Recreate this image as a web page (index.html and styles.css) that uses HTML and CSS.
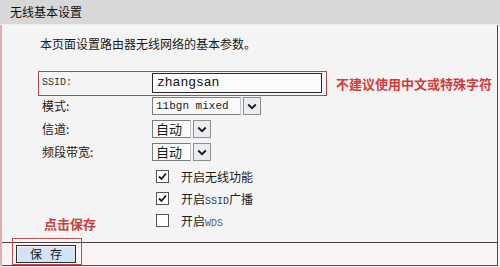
FILE: index.html
```html
<!DOCTYPE html>
<html lang="zh">
<head>
<meta charset="utf-8">
<title>无线基本设置</title>
<link rel="stylesheet" href="styles.css">
</head>
<body>
<div class="hdr">无线基本设置</div>
<div class="panel">
  <div class="main">
    <p class="intro">本页面设置路由器无线网络的基本参数。</p>
    <div class="ssid-line">
      <div class="ssid-box">
        <span class="lbl mono-s">SSID:</span>
        <span class="input">zhangsan</span>
      </div>
      <span class="warn">不建议使用中文或特殊字符</span>
    </div>
    <div class="row r1">
      <span class="lbl">模式:</span>
      <span class="select">
        <span class="val wide mono-m">11bgn mixed</span>
        <span class="arrow"><svg width="10" height="7" viewBox="0 0 10 7"><path d="M1.2 1.5 L5 5.2 L8.8 1.5" fill="none" stroke="#1a1a1a" stroke-width="1.8"/></svg></span>
      </span>
    </div>
    <div class="row">
      <span class="lbl">信道:</span>
      <span class="select">
        <span class="val narrow">自动</span>
        <span class="arrow"><svg width="10" height="7" viewBox="0 0 10 7"><path d="M1.2 1.5 L5 5.2 L8.8 1.5" fill="none" stroke="#1a1a1a" stroke-width="1.8"/></svg></span>
      </span>
    </div>
    <div class="row">
      <span class="lbl">频段带宽:</span>
      <span class="select">
        <span class="val narrow">自动</span>
        <span class="arrow"><svg width="10" height="7" viewBox="0 0 10 7"><path d="M1.2 1.5 L5 5.2 L8.8 1.5" fill="none" stroke="#1a1a1a" stroke-width="1.8"/></svg></span>
      </span>
    </div>
    <div class="checks">
      <div class="chk"><span class="box"><svg width="11" height="11" viewBox="0 0 11 11"><path d="M2 5.5 L4.5 8 L9 2.5" fill="none" stroke="#1a1a1a" stroke-width="1.8"/></svg></span><span>开启无线功能</span></div>
      <div class="chk"><span class="box"><svg width="11" height="11" viewBox="0 0 11 11"><path d="M2 5.5 L4.5 8 L9 2.5" fill="none" stroke="#1a1a1a" stroke-width="1.8"/></svg></span><span>开启<span class="mono-s">SSID</span>广播</span></div>
      <div class="chk"><span class="box"></span><span>开启<span class="mono-s light">WDS</span></span></div>
    </div>
    <span class="note">点击保存</span>
  </div>
  <div class="foot">
    <span class="btn-wrap"><span class="btn"><span>保</span><span>存</span></span></span>
  </div>
</div>
</body>
</html>
```

FILE: styles.css
```css
* { box-sizing: border-box; }
html, body { margin: 0; padding: 0; }
body {
  width: 500px;
  height: 267px;
  overflow: hidden;
  background: #f8f2f3;
  font-family: "Noto Sans CJK SC", "Noto Sans", sans-serif;
  font-size: 12px;
  color: #1a1a1a;
}
.hdr {
  height: 25px;
  line-height: 24px;
  background: #d8d8d8;
  border-bottom: 1px solid #ededed;
  padding-left: 10px;
  color: #111;
}
.panel {
  width: 498px;
  border-left: 2px solid #dfb0b0;
  border-right: 1px solid #5a4848;
}
.main {
  position: relative;
  background: #f4f4f4;
  padding: 11px 0 11px 36px;
  border-bottom: 1px solid #4d3f3f;
}
.intro {
  margin: 0;
  padding-left: 2px;
  line-height: 16px;
}
.ssid-line {
  margin-top: 19px;
  display: flex;
  align-items: center;
}
.ssid-box {
  display: flex;
  align-items: center;
  width: 289px;
  height: 25px;
  border: 1px solid #b04a4a;
  padding: 1px 4px 2px 3px;
}
.lbl {
  width: 110px;
  flex: none;
  line-height: 16px;
}
.mono-s {
  font-family: "Liberation Mono", "DejaVu Sans Mono", monospace;
  font-size: 10px;
  color: #333;
}
.mono-m {
  font-family: "Liberation Mono", "DejaVu Sans Mono", monospace;
  font-size: 11px;
}
.light { color: #5c6070; }
.input {
  width: 170px;
  height: 20px;
  border: 1px solid #2a2a2a;
  background: #fbfbfb;
  padding-left: 4px;
  font-family: "Liberation Mono", "DejaVu Sans Mono", monospace;
  font-size: 13px;
  line-height: 18px;
  color: #111;
}
.warn {
  margin-left: 9px;
  color: #d43a3a;
  font-weight: bold;
  font-size: 13px;
}
.row {
  display: flex;
  align-items: center;
  height: 18px;
  margin-top: 5px;
  padding-left: 4px;
}
.row.r1 { margin-top: 1px; }
.select {
  display: flex;
  gap: 2px;
  height: 18px;
}
.val {
  height: 18px;
  border: 1px solid #7c7c7c;
  border-right-color: #c8c8c8;
  background: #fafafa;
  padding-left: 3px;
  line-height: 16px;
}
.val.wide { width: 89px; }
.val.narrow { width: 39px; font-size: 13px; }
.arrow {
  width: 18px;
  height: 18px;
  border: 1px solid #8e8e8e;
  background: #e9ecf1;
  display: flex;
  align-items: center;
  justify-content: center;
}
.checks {
  margin-top: 4px;
  padding-left: 118px;
}
.chk {
  display: flex;
  align-items: center;
  height: 22px;
  gap: 12px;
}
.box {
  width: 13px;
  height: 13px;
  border: 1px solid #555;
  background: #fdfdfd;
  display: flex;
  align-items: center;
  justify-content: center;
}
.note {
  position: absolute;
  left: 42px;
  top: 191px;
  line-height: 16px;
  color: #c94040;
  font-weight: bold;
  font-size: 13px;
}
.foot {
  background: #f9f3f4;
  padding: 2px 0 2px 14px;
  border-bottom: 1px solid #5a4848;
}
.btn-wrap {
  position: relative;
  display: inline-block;
  vertical-align: top;
}
.btn-wrap::after {
  content: "";
  position: absolute;
  top: -7px;
  left: -4px;
  right: -6px;
  bottom: -2px;
  border: 1px solid #b85050;
}
.btn {
  width: 60px;
  height: 18px;
  display: flex;
  align-items: center;
  justify-content: center;
  gap: 8px;
  background: #d2e3f7;
  border: 1px solid #2c2c2c;
  box-shadow: inset 1px 1px 0 #f4f8fd;
  line-height: 16px;
}
```
